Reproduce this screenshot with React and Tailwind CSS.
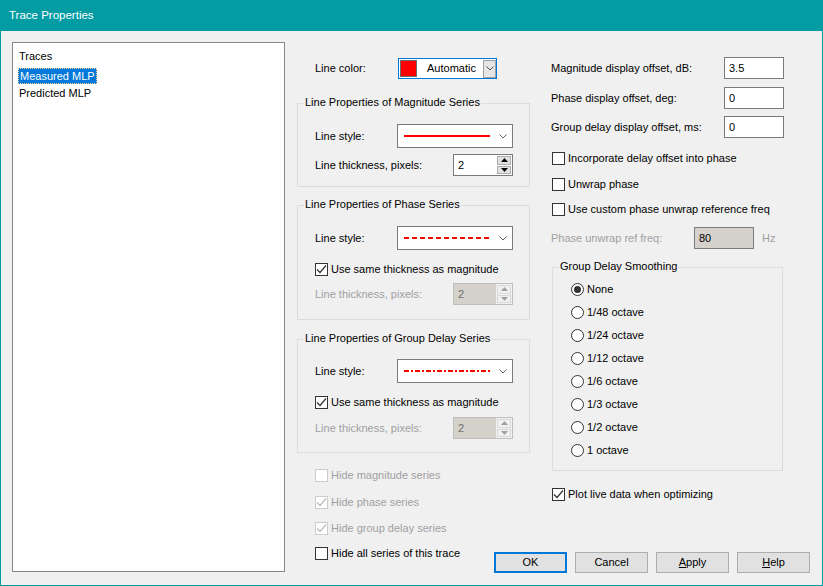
import React from 'react';

const Chevron = ({ color = '#606060' }) => (
  <svg width="8" height="5" viewBox="0 0 8 5">
    <path d="M0.5 0.5 L4 4 L7.5 0.5" fill="none" stroke={color} strokeWidth="1" />
  </svg>
);

const Check = ({ checked, disabled, label }) => (
  <div className="flex items-center h-[13px]">
    <span
      className={`w-[13px] h-[13px] border flex items-center justify-center shrink-0 ${
        disabled ? 'border-[#cccccc] bg-white' : 'border-[#333333] bg-white'
      }`}
    >
      {checked && (
        <svg width="11" height="11" viewBox="0 0 11 11">
          <path
            d="M1 5.5 L4 8.5 L10 1.5"
            fill="none"
            stroke={disabled ? '#bcbcbc' : '#333333'}
            strokeWidth="1.2"
          />
        </svg>
      )}
    </span>
    <span className={`ml-[3px] whitespace-nowrap ${disabled ? 'text-[#a0a0a0]' : 'text-black'}`}>
      {label}
    </span>
  </div>
);

const Radio = ({ selected, label }) => (
  <div className="flex items-center h-[23px]">
    <span className="w-[13px] h-[13px] rounded-full border border-[#333333] bg-white flex items-center justify-center">
      {selected && <span className="w-[7px] h-[7px] rounded-full bg-[#333333]" />}
    </span>
    <span className="ml-[3px]">{label}</span>
  </div>
);

const LineSample = ({ dash }) => (
  <svg width="87" height="4" viewBox="0 0 87 4">
    <line x1="0" y1="2" x2="86" y2="2" stroke="#ff0000" strokeWidth="2" strokeDasharray={dash} />
  </svg>
);

const StyleCombo = ({ dash }) => (
  <div className="w-[116px] h-[24px] border border-[#7a7a7a] bg-white flex items-center pl-[6px] pr-[5px]">
    <LineSample dash={dash} />
    <span className="ml-auto flex">
      <Chevron />
    </span>
  </div>
);

const Tri = ({ up, color }) => (
  <svg width="7" height="4" viewBox="0 0 7 4">
    <path d={up ? 'M0 4 L3.5 0 L7 4 Z' : 'M0 0 L3.5 4 L7 0 Z'} fill={color} />
  </svg>
);

const Spin = ({ disabled }) => (
  <div
    className={`w-[60px] h-[22px] border flex ${
      disabled ? 'border-[#bfbfbf] bg-[#d5d1cb]' : 'border-[#7a7a7a] bg-white'
    }`}
  >
    <span className={`flex-1 pl-[4px] pt-[3px] leading-[14px] ${disabled ? 'text-[#6d6d6d]' : 'text-black'}`}>2</span>
    <div className={`w-[16px] flex flex-col p-[1px] gap-[1px] ${disabled ? 'bg-[#f0f0f0]' : 'bg-white'}`}>
      <span
        className={`flex-1 border flex items-center justify-center ${
          disabled ? 'border-[#d9d9d9] bg-[#f0f0f0]' : 'border-[#adadad] bg-[#e1e1e1]'
        }`}
      >
        <Tri up color={disabled ? '#a0a0a0' : '#000000'} />
      </span>
      <span
        className={`flex-1 border flex items-center justify-center ${
          disabled ? 'border-[#d9d9d9] bg-[#f0f0f0]' : 'border-[#adadad] bg-[#e1e1e1]'
        }`}
      >
        <Tri color={disabled ? '#a0a0a0' : '#000000'} />
      </span>
    </div>
  </div>
);

const Group = ({ title, className, children }) => (
  <div className={`relative border border-[#dcdcdc] ${className}`}>
    <span className="absolute left-[6px] -top-[8px] px-[1px] bg-[#f0f0f0] leading-[13px] whitespace-nowrap">
      {title}
    </span>
    {children}
  </div>
);

const Edit = ({ value, disabled, className = '' }) => (
  <div
    className={`w-[60px] h-[22px] border border-[#7a7a7a] pl-[4px] pt-[3px] leading-[14px] ${
      disabled ? 'bg-[#d5d1cb]' : 'bg-white'
    } ${className}`}
  >
    {value}
  </div>
);

const Button = ({ children, primary }) => (
  <div
    className={`w-[73px] h-[21px] flex items-center justify-center bg-[#e1e1e1] ${
      primary ? 'border-2 border-[#0078d7]' : 'border border-[#adadad]'
    }`}
  >
    {children}
  </div>
);

export default function App() {
  return (
    <div className="w-[823px] h-[586px] flex flex-col font-['Liberation_Sans',Arial,sans-serif] text-[11px] leading-[13px] text-black">
      {/* Title bar */}
      <div className="h-[31px] bg-[#029ca2] text-white text-[11.5px] pl-[9px] flex items-center shrink-0">
        Trace Properties
      </div>

      <div className="flex-1 flex bg-[#f0f0f0] border-x border-b border-[#029ca2] pl-[11px]">
        {/* Traces list */}
        <div className="mt-[11px] w-[273px] h-[530px] border border-[#828790] bg-white flex flex-col items-start">
          <div className="mt-[5px] ml-[5px] h-[16px] px-[1px] flex items-center">Traces</div>
          <div className="mt-[4px] ml-[5px] h-[16px] px-[1px] flex items-center bg-[#0078d7] text-white border border-dotted border-[#ffd49a]">
            Measured MLP
          </div>
          <div className="ml-[5px] h-[18px] px-[1px] flex items-center">Predicted MLP</div>
        </div>

        {/* Properties area */}
        <div className="ml-[12px] flex-1 flex flex-col pr-[12px]">
          <div className="flex">
            {/* Middle column */}
            <div className="w-[233px] flex flex-col">
              <div className="mt-[27px] h-[21px] flex items-center">
                <span className="pl-[18px] w-[101px]">Line color:</span>
                <div className="w-[99px] h-[21px] border border-[#0078d7] bg-white flex items-center">
                  <span className="ml-[1px] w-[17px] h-[17px] bg-[#ff0000] border border-[#6a6a6a]" />
                  <span className="ml-[10px]">Automatic</span>
                  <span className="ml-auto w-[13px] h-[18px] bg-[#e5e5e5] border border-[#a0a0a0] flex items-center justify-center">
                    <Chevron color="#505050" />
                  </span>
                </div>
              </div>

              <Group title="Line Properties of Magnitude Series" className="mt-[24px] h-[84px]">
                <div className="mt-[20px] h-[24px] flex items-center">
                  <span className="pl-[17px] w-[99px]">Line style:</span>
                  <StyleCombo />
                </div>
                <div className="mt-[6px] h-[22px] flex items-center">
                  <span className="pl-[17px] w-[155px]">Line thickness, pixels:</span>
                  <Spin />
                </div>
              </Group>

              <Group title="Line Properties of Phase Series" className="mt-[18px] h-[115px]">
                <div className="mt-[20px] h-[24px] flex items-center">
                  <span className="pl-[17px] w-[99px]">Line style:</span>
                  <StyleCombo dash="5 3" />
                </div>
                <div className="mt-[13px] pl-[17px]">
                  <Check checked label="Use same thickness as magnitude" />
                </div>
                <div className="mt-[7px] h-[22px] flex items-center">
                  <span className="pl-[17px] w-[155px] text-[#a0a0a0]">Line thickness, pixels:</span>
                  <Spin disabled />
                </div>
              </Group>

              <Group title="Line Properties of Group Delay Series" className="mt-[19px] h-[114px]">
                <div className="mt-[19px] h-[24px] flex items-center">
                  <span className="pl-[17px] w-[99px]">Line style:</span>
                  <StyleCombo dash="5 2 2 2" />
                </div>
                <div className="mt-[13px] pl-[17px]">
                  <Check checked label="Use same thickness as magnitude" />
                </div>
                <div className="mt-[8px] h-[22px] flex items-center">
                  <span className="pl-[17px] w-[155px] text-[#a0a0a0]">Line thickness, pixels:</span>
                  <Spin disabled />
                </div>
              </Group>

              <div className="mt-[16px] pl-[18px]">
                <Check disabled label="Hide magnitude series" />
              </div>
              <div className="mt-[14px] pl-[18px]">
                <Check disabled checked label="Hide phase series" />
              </div>
              <div className="mt-[13px] pl-[18px]">
                <Check disabled checked label="Hide group delay series" />
              </div>
            </div>

            {/* Right column */}
            <div className="ml-[21px] w-[233px] flex flex-col">
              <div className="mt-[26px] h-[22px] flex items-center">
                <span>Magnitude display offset, dB:</span>
                <Edit value="3.5" className="ml-auto" />
              </div>
              <div className="mt-[8px] h-[22px] flex items-center">
                <span>Phase display offset, deg:</span>
                <Edit value="0" className="ml-auto" />
              </div>
              <div className="mt-[7px] h-[22px] flex items-center">
                <span>Group delay display offset, ms:</span>
                <Edit value="0" className="ml-auto" />
              </div>
              <div className="mt-[14px] pl-[1px]">
                <Check label="Incorporate delay offset into phase" />
              </div>
              <div className="mt-[13px] pl-[1px]">
                <Check label="Unwrap phase" />
              </div>
              <div className="mt-[12px] pl-[1px]">
                <Check label="Use custom phase unwrap reference freq" />
              </div>
              <div className="mt-[11px] h-[22px] flex items-center">
                <span className="w-[143px] text-[#a0a0a0]">Phase unwrap ref freq:</span>
                <Edit value="80" disabled />
                <span className="ml-[8px] text-[#a0a0a0]">Hz</span>
              </div>

              <Group title="Group Delay Smoothing" className="mt-[18px] ml-[1px] w-[231px] h-[204px]">
                <div className="mt-[10px] pl-[18px] flex flex-col">
                  <Radio selected label="None" />
                  <Radio label="1/48 octave" />
                  <Radio label="1/24 octave" />
                  <Radio label="1/12 octave" />
                  <Radio label="1/6 octave" />
                  <Radio label="1/3 octave" />
                  <Radio label="1/2 octave" />
                  <Radio label="1 octave" />
                </div>
              </Group>

              <div className="mt-[17px] pl-[1px]">
                <Check checked label="Plot live data when optimizing" />
              </div>
            </div>
          </div>

          {/* Bottom row */}
          <div className="mt-[12px] flex items-start">
            <div className="pl-[18px]">
              <Check label="Hide all series of this trace" />
            </div>
            <div className="ml-auto mt-[5px] flex gap-[8px]">
              <Button primary>OK</Button>
              <Button>Cancel</Button>
              <Button>
                <span>
                  <span className="underline">A</span>pply
                </span>
              </Button>
              <Button>
                <span>
                  <span className="underline">H</span>elp
                </span>
              </Button>
            </div>
          </div>
        </div>
      </div>
    </div>
  );
}
